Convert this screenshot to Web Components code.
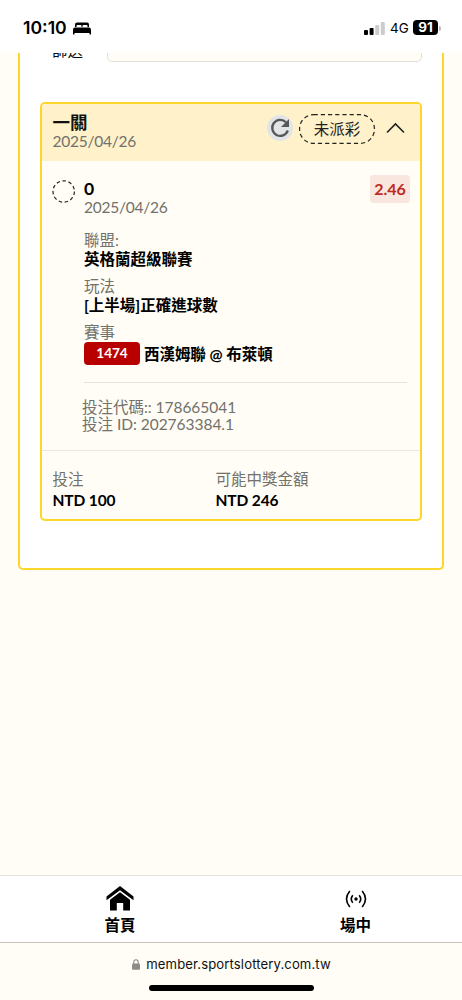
<!DOCTYPE html>
<html lang="zh-Hant">
<head>
<meta charset="utf-8">
<title>投注紀錄</title>
<style>
  html, body { margin: 0; height: 100%; }
  body {
    font-family: Lato, "Noto Sans CJK TC", sans-serif;
    font-size: 15.5px;
    color: #0b0b0b;
    background: #fffdf5;
    --yellow: #fdd62c;
    --cream: #fffdf5;
    --muted: #72716c;
  }
</style>
</head>
<body>
<lottery-app></lottery-app>

<script>
class BaseElement extends HTMLElement {
  constructor() {
    super();
    const template = document.createElement('template');
    template.innerHTML = this.render();
    this.attachShadow({ mode: 'open' });
    this.shadowRoot.appendChild(template.content.cloneNode(true));
  }
}

class StatusBar extends BaseElement {
  render() {
    return `
      <style>
        :host {
          display: flex;
          align-items: center;
          box-sizing: border-box;
          height: 53px;
          padding: 3px 21px 0 23px;
          background: #fff;
          color: #000;
          font-family: Inter, sans-serif;
        }
        .time { font-size: 17.6px; font-weight: 600; line-height: 20px; width: 50px; white-space: nowrap; }
        .right { display: flex; align-items: center; margin-left: auto; }
        .net { font-size: 13.4px; font-weight: 400; width: 23px; margin-left: 5px; line-height: 16px; }
        .battery {
          width: 25px; height: 15px; border-radius: 4px; background: #000; color: #fff;
          font-size: 13.5px; font-weight: 700; line-height: 15px; text-align: center;
          margin-top: -1px;
        }
        .tip { width: 2px; height: 5px; margin-left: 1px; border-radius: 0 2px 2px 0; background: #bbb; }
      </style>
      <span class="time">10:10</span>
      <svg width="18" height="13" viewBox="0 0 18 13">
        <path d="M2 5V2.5Q2 .5 4 .5H14Q16 .5 16 2.5V5H14.5V4Q14.500 3 13.500 3H10.500Q9.500 3 9.500 4V5H8.500V4Q8.500 3 7.500 3H4.500Q3.500 3 3.500 4V5Z"/>
        <path d="M2 5.600H16Q18 5.600 18 8V12.500H16.500V11H1.500V12.500H0V8Q0 5.600 2 5.600Z"/>
      </svg>
      <div class="right">
        <svg width="21" height="13" viewBox="0 0 21 13">
          <rect x="0" y="8" width="4" height="5" rx="1"/>
          <rect x="5.600" y="6" width="4" height="7" rx="1"/>
          <rect x="11.200" y="3" width="4" height="10" rx="1" fill="#ccc"/>
          <rect x="16.800" y="0" width="4" height="13" rx="1" fill="#ccc"/>
        </svg>
        <span class="net">4G</span>
        <span class="battery">91</span>
        <span class="tip"></span>
      </div>
    `;
  }
}
customElements.define('status-bar', StatusBar);

class FilterRow extends BaseElement {
  render() {
    return `
      <style>
        :host { display: flex; align-items: flex-end; height: 9px; overflow: hidden; padding-left: 12px; }
        .label { width: 55px; flex: none; line-height: 20px; margin-bottom: 2px; }
        .field {
          flex: 1; height: 36px; box-sizing: border-box;
          border: 1px solid #e2dfdb; border-radius: 5px; background: var(--cream);
        }
      </style>
      <span class="label"><slot></slot></span>
      <div class="field"></div>
    `;
  }
}
customElements.define('filter-row', FilterRow);

class BetField extends BaseElement {
  render() {
    return `
      <style>
        :host { display: block; margin-bottom: 9px; }
        .label { color: var(--muted); line-height: 19px; font-weight: 400; }
        .value { font-weight: 700; line-height: 18px; color: #000; }
      </style>
      <div class="label"><slot name="label"></slot></div>
      <div class="value"><slot></slot></div>
    `;
  }
}
customElements.define('bet-field', BetField);

class BetHeader extends BaseElement {
  render() {
    return `
      <style>
        :host {
          display: flex; align-items: flex-start; box-sizing: border-box; height: 57px;
          padding: 9px 15px 0 10.500px; background: #fff1c9;
        }
        .title { font-size: 17.500px; font-weight: 700; line-height: 19px; color: #111; }
        .date { color: var(--muted); line-height: 18px; letter-spacing: -0.23px; }
        .actions { display: flex; align-items: center; margin: 1px 0 0 auto; }
        .refresh { display: flex; width: 26px; height: 26px; border-radius: 50%; background: #e3e4e5; margin: -2px 6px 0 0; }
        .pill { position: relative; width: 76px; height: 30px; line-height: 31px; text-align: center; color: #222; }
        .pill svg { position: absolute; left: 0; top: 0; }
        .arrow { margin: -3px 0 0 11px; }
      </style>
      <div>
        <div class="title"><slot></slot></div>
        <div class="date"><slot name="date"></slot></div>
      </div>
      <div class="actions">
        <span class="refresh">
          <svg width="26" height="26" viewBox="0 0 26 26">
            <path d="M19 7.300A8 8 0 1 0 20.800 15.500" fill="none" stroke="#55575b" stroke-width="2.300"/>
            <path d="M22 4V12H14Z" fill="#55575b"/>
          </svg>
        </span>
        <span class="pill">
          <svg width="76" height="30"><rect x=".6" y=".6" width="74.800" height="28.800" rx="14" fill="none" stroke="#222" stroke-width="1.200" stroke-dasharray="4.200 3"/></svg>
          <slot name="status"></slot>
        </span>
        <svg class="arrow" width="19" height="12" viewBox="0 0 19 12"><path d="M1 10.500L9.500 2L18 10.500" fill="none" stroke="#222" stroke-width="1.600"/></svg>
      </div>
    `;
  }
}
customElements.define('bet-header', BetHeader);

class BetCard extends BaseElement {
  render() {
    return `
      <style>
        :host {
          display: block; box-sizing: border-box; height: 419px; overflow: hidden;
          border: 2px solid var(--yellow); border-radius: 5px; background: var(--cream);
        }
        .body { display: flex; align-items: flex-start; box-sizing: border-box; height: 289px; padding: 18px 10px 0 10px; }
        .ring { flex: none; margin: 1px 8px 0 0; }
        .main { flex: 1; min-width: 0; }
        .top { display: flex; justify-content: space-between; height: 52px; }
        .pick { font-size: 17.500px; font-weight: 700; line-height: 19px; color: #000; }
        .muted { color: var(--muted); line-height: 18px; letter-spacing: -0.23px; }
        .odds {
          width: 40px; height: 28px; margin-top: -4px; border-radius: 4px; background: #f8e6df;
          color: #be2a20; font-size: 16px; font-weight: 700; line-height: 28px; text-align: center;
        }
        .match { display: flex; align-items: center; height: 23px; letter-spacing: -0.05px; }
        .no {
          width: 56px; height: 23px; margin-right: 4px; border-radius: 4px; background: #b80000;
          color: #fff; font-size: 13.600px; line-height: 23px; text-align: center;
        }
        .ids {
          margin: 17px 3px 0 0; padding-top: 16px; border-top: 1px solid #e6e3dd;
          color: var(--muted); line-height: 16.600px; letter-spacing: -0.03px;
        }
        .ids div { margin-left: -2px; }
        .foot { display: grid; grid-template-columns: 163px 1fr; border-top: 1px solid #ebe8e3; padding: 18px 10.500px 0; }
        .foot b { display: block; color: #000; line-height: 22px; letter-spacing: -0.12px; }
        .foot span { display: block; color: var(--muted); line-height: 20px; }
      </style>
      <bet-header>一關<span slot="date">2025/04/26</span><span slot="status">未派彩</span></bet-header>
      <div class="body">
        <svg class="ring" width="24" height="24"><circle cx="11.700" cy="11.500" r="10.700" fill="none" stroke="#222" stroke-width="1.200" stroke-dasharray="3.500 2.610"/></svg>
        <div class="main">
          <div class="top">
            <div>
              <div class="pick">0</div>
              <div class="muted">2025/04/26</div>
            </div>
            <div class="odds">2.46</div>
          </div>
          <bet-field><span slot="label">聯盟:</span>英格蘭超級聯賽</bet-field>
          <bet-field><span slot="label">玩法</span>[上半場]正確進球數</bet-field>
          <bet-field>
            <span slot="label">賽事</span>
            <div class="match"><span class="no">1474</span>西漢姆聯 @ 布萊頓</div>
          </bet-field>
          <div class="ids">
            <div>投注代碼:: 178665041</div>
            <div>投注 ID: 202763384.1</div>
          </div>
        </div>
      </div>
      <div class="foot">
        <div><span>投注</span><b>NTD 100</b></div>
        <div><span>可能中獎金額</span><b>NTD 246</b></div>
      </div>
    `;
  }
}
customElements.define('bet-card', BetCard);

class NavItem extends BaseElement {
  render() {
    return `
      <style>
        :host { display: flex; flex-direction: column; align-items: center; width: 60px; font-weight: 700; color: #000; }
        .icon { display: flex; align-items: center; justify-content: center; height: 29px; }
        .text { line-height: 24px; }
      </style>
      <div class="icon"><slot name="icon"></slot></div>
      <div class="text"><slot></slot></div>
    `;
  }
}
customElements.define('nav-item', NavItem);

class BottomNav extends BaseElement {
  render() {
    return `
      <style>
        :host {
          display: flex; justify-content: space-between; box-sizing: border-box; height: 67px;
          padding: 8px 76.500px 0 90px; background: #fff; border-top: 1px solid #e4e3df;
        }
      </style>
      <nav-item>
        <svg slot="icon" width="28" height="25" viewBox="0 0 28 25">
          <path d="M14 0L27.500 10.500V14.200L14 4.200L.5 14.200V10.500Z"/>
          <path d="M14 6.300L24 13.800V24.500H17.200V17H10.800V24.500H4V13.800Z"/>
        </svg>
        首頁
      </nav-item>
      <nav-item>
        <svg slot="icon" width="22" height="18" viewBox="0 0 22 18" fill="none" stroke="#000" stroke-width="1.600">
          <circle cx="11" cy="9" r="1.700" fill="#000" stroke="none"/>
          <path d="M7.800 5.200Q4.700 9 7.800 12.800M14.200 5.200Q17.300 9 14.200 12.800"/>
          <path d="M4.800 1Q-1.800 9 4.800 17M17.200 1Q23.800 9 17.200 17"/>
        </svg>
        場中
      </nav-item>
    `;
  }
}
customElements.define('bottom-nav', BottomNav);

class BrowserBar extends BaseElement {
  render() {
    return `
      <style>
        :host {
          display: flex; flex-direction: column; align-items: center; box-sizing: border-box; height: 58px;
          border-top: 1px solid #c4c2bb; background: var(--cream); font-family: Inter, sans-serif;
        }
        .url { display: flex; align-items: center; gap: 6px; margin: 12px 0 0 1px; height: 18px; font-size: 13.100px; letter-spacing: 0.12px; line-height: 18px; color: #111; white-space: nowrap; }
        .home { width: 165px; height: 6px; margin-top: 12px; border-radius: 3px; background: #000; }
      </style>
      <div class="url">
        <svg width="8" height="11" viewBox="0 0 8 11">
          <rect x="0" y="4.600" width="8" height="6.200" rx="1.200" fill="#8c8b88"/>
          <path d="M1.800 5V3Q1.800 .7 4 .7Q6.200 .7 6.200 3V5" fill="none" stroke="#8c8b88" stroke-width="1.100"/>
        </svg>
        <span>member.sportslottery.com.tw</span>
      </div>
      <div class="home"></div>
    `;
  }
}
customElements.define('browser-bar', BrowserBar);

class LotteryApp extends BaseElement {
  render() {
    return `
      <style>
        :host { display: flex; flex-direction: column; height: 1000px; }
        main { flex: 1; padding: 0 18px; overflow: hidden; }
        .panel {
          box-sizing: border-box; height: 517px; padding: 0 20px; background: #fff;
          border: 2px solid var(--yellow); border-top: 0; border-radius: 0 0 5px 5px;
        }
        bet-card { margin-top: 40px; }
      </style>
      <status-bar></status-bar>
      <main>
        <div class="panel">
          <filter-row>篩選</filter-row>
          <bet-card></bet-card>
        </div>
      </main>
      <bottom-nav></bottom-nav>
      <browser-bar></browser-bar>
    `;
  }
}
customElements.define('lottery-app', LotteryApp);
</script>
</body>
</html>
